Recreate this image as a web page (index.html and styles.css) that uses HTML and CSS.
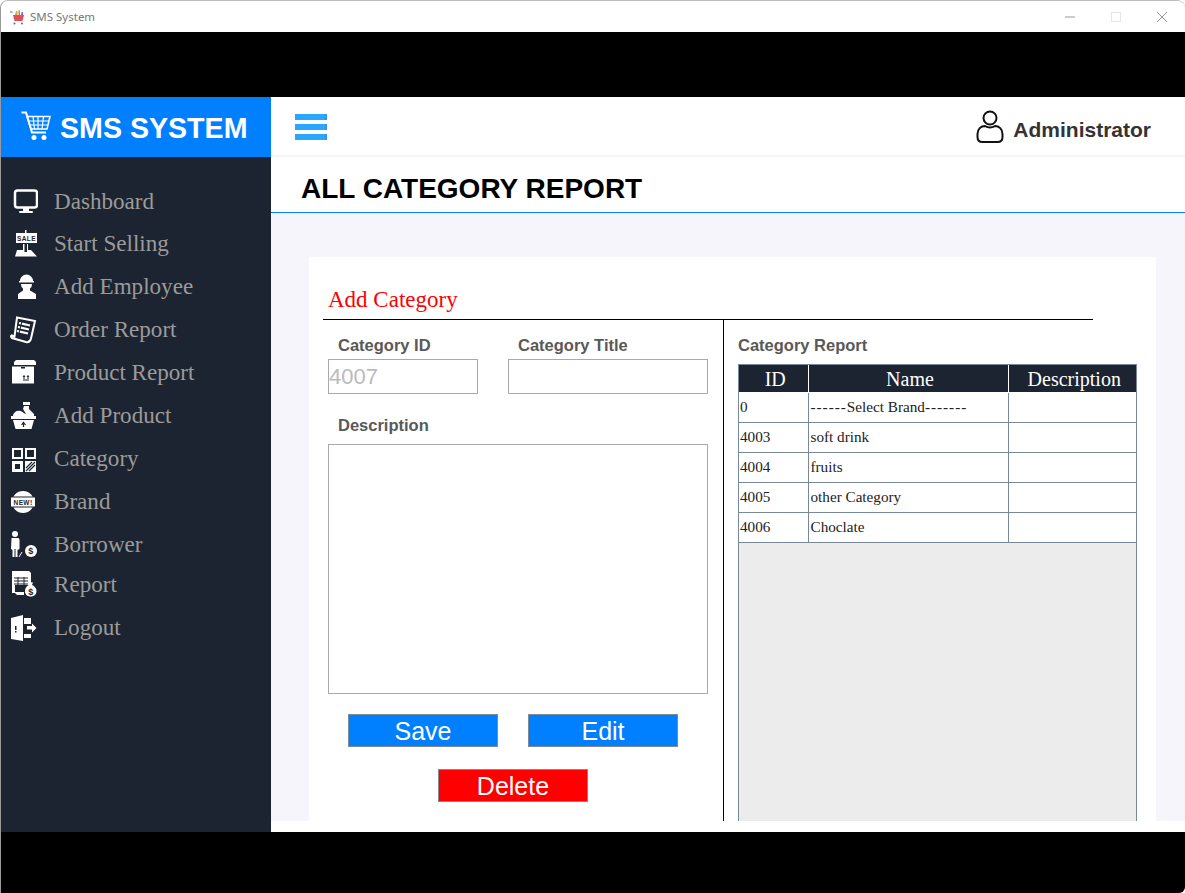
FILE: index.html
```html
<!DOCTYPE html>
<html lang="en">
<head>
    <meta charset="UTF-8">
    <meta name="viewport" content="width=device-width, initial-scale=1.0">
    <title>SMS System</title>
    <link rel="stylesheet" href="styles.css">
</head>
<body>
    <div class="window">
        <div class="titlebar">
            <svg class="app-icon" viewBox="0 0 16 16">
                <path d="M3 6h11l-1.500 6h-8z" fill="#e0505a"/>
                <path d="M5 6l1-4h1.500v4z" fill="#e8a030"/>
                <path d="M8.500 6V1.500H10V6z" fill="#70b060"/>
                <path d="M11 6l.5-3H13v3z" fill="#a060c0"/>
                <circle cx="4.500" cy="14.500" r="1" fill="#666"/>
                <circle cx="12" cy="14.500" r="1" fill="#666"/>
                <path d="M0 3h2.500" stroke="#666" stroke-width="1"/>
            </svg>
            <span class="app-name">SMS System</span>
            <div class="win-controls">
                <svg viewBox="0 0 12 12"><path d="M1 6h10" stroke="#999" stroke-width="1"/></svg>
                <svg viewBox="0 0 12 12"><rect x="1.500" y="1.500" width="9" height="9" fill="none" stroke="#e6e6e6"/></svg>
                <svg viewBox="0 0 12 12"><path d="M1 1l10 10M11 1L1 11" stroke="#999" stroke-width="1"/></svg>
            </div>
        </div>
        <div class="black-bar top"></div>
        <div class="app">
            <aside class="sidebar">
                <div class="logo">
                    <svg class="logo-cart" viewBox="0 0 30 30" fill="none" stroke="#fff">
                        <path d="M0.500 1.500h4.500l6 20h14" stroke-width="2"/>
                        <path d="M6 5.500h23l-3 12.500H10z" stroke-width="1.500"/>
                        <path d="M12 5.500l1.500 12.500M17 5.500v12.500M22.500 5.500L21 18M7.500 10h20.500M9 14h18" stroke-width="1.200"/>
                        <circle cx="13" cy="26.500" r="2.500" fill="#fff" stroke="none"/>
                        <circle cx="23" cy="26.500" r="2.500" fill="#fff" stroke="none"/>
                    </svg>
                    <span>SMS SYSTEM</span>
                </div>
                <nav class="nav">
                    <a class="nav-item">
                        <svg viewBox="0 0 28 28"><rect x="5" y="3.500" width="22" height="17" rx="2.500" fill="none" stroke="#fff" stroke-width="2.500"/><rect x="13" y="21" width="6" height="3" fill="#fff"/><rect x="9" y="24" width="14" height="2" rx="1" fill="#fff"/></svg>
                        Dashboard
                    </a>
                    <a class="nav-item">
                        <svg viewBox="0 0 28 28"><rect x="15" y="0" width="1.500" height="3" fill="#fff"/><rect x="6" y="3" width="21" height="10" fill="#fff"/><text x="16.500" y="11" class="icon-text">SALE</text><path d="M7 20h6v-6h1.500v8h2.500v-8H18v6h3l6 6.500H5z" fill="#fff"/></svg>
                        Start Selling
                    </a>
                    <a class="nav-item">
                        <svg viewBox="0 0 28 28"><path d="M10 8a6.500 6.500 0 0 1 13 0h1v1.500H9V8z" fill="#fff"/><path d="M11 11h11a5.500 5.500 0 0 1-2 4.500v2l6 3.500v5H8v-5l5-3.500v-2a5.500 5.500 0 0 1-2-4.500z" fill="#fff"/></svg>
                        Add Employee
                    </a>
                    <a class="nav-item">
                        <svg viewBox="0 0 28 28"><path d="M7 1.500l18 3.500-4 17.500c-.8 3-3 4-5 3.500L2 22c-1-1-1-2-.5-2.500l3 1z" fill="none" stroke="#fff" stroke-width="2"/><path d="M9 7l11 2.500M8 11l11 2.500M7 15l11 2.500" stroke="#fff" stroke-width="2.200" stroke-dasharray="2 1 9 0"/></svg>
                        Order Report
                    </a>
                    <a class="nav-item">
                        <svg viewBox="0 0 28 28"><path d="M4 3l2-2h18l2 2v3H4z" fill="#fff"/><path d="M2 7h22v17H2z" fill="#fff" transform="translate(0 .500)"/><rect x="11" y="8" width="4" height="1.500" fill="#1c2431"/><path d="M14 20v-3M18 20v-3M13 18l1-1.500 1 1.500M17 18l1-1.500 1 1.500M13 21h6" stroke="#1c2431" fill="none"/></svg>
                        Product Report
                    </a>
                    <a class="nav-item">
                        <svg viewBox="0 0 28 28"><rect x="13" y="0" width="7" height="3" fill="#fff"/><path d="M14 4h5v3l5 5v2H3c0-2 3-6 6-5 2-1 5 3 7 3l-3-5z" fill="#fff"/><rect x="1" y="14" width="25" height="3" fill="#fff"/><path d="M3 18h21l-2.500 9h-16z" fill="#fff"/><path d="M13.500 25v-4M11.500 23l2-2.500 2 2.500" stroke="#1c2431" stroke-width="1.200" fill="none"/></svg>
                        Add Product
                    </a>
                    <a class="nav-item">
                        <svg viewBox="0 0 28 28"><g fill="none" stroke="#fff" stroke-width="2"><rect x="3" y="4" width="9" height="9"/><rect x="16" y="4" width="9" height="9"/></g><rect x="2" y="16" width="11" height="11" fill="#fff"/><rect x="15" y="16" width="11" height="11" fill="#fff"/><path d="M5 19h5v5H5z" fill="#1c2431"/><path d="M16 26l9-9M16 23l6-6M19 26l6-6" stroke="#1c2431" stroke-width="1.200"/></svg>
                        Category
                    </a>
                    <a class="nav-item">
                        <svg viewBox="0 0 28 28"><circle cx="13" cy="14" r="11" fill="#fff"/><rect x="0" y="8.500" width="26" height="11" fill="#1c2431"/><rect x="1" y="9.500" width="24" height="9" fill="#fff"/><text x="13" y="17" class="icon-text">NEW!</text></svg>
                        Brand
                    </a>
                    <a class="nav-item">
                        <svg viewBox="0 0 28 28"><circle cx="5" cy="3" r="3" fill="#fff"/><path d="M1.500 7h7l1 1.500V18l-2 1v7H5.500v-8H4.500v8H2.500v-7L1 18z" fill="#fff"/><circle cx="21" cy="20" r="6" fill="#fff"/><text x="21" y="23" class="icon-text dollar">$</text><path d="M9 26l3-5" stroke="#fff"/></svg>
                        Borrower
                    </a>
                    <a class="nav-item nav-short">
                        <svg viewBox="0 0 28 28"><path d="M2 1h17l2 2v12H2z" fill="#fff"/><path d="M4 8h14M4 11h14M4 14h14M4 17h14M4 20h10M8 7v15M14 7v10" stroke="#1c2431" stroke-width="1"/><path d="M4 22h10v3H7z" fill="#fff"/><path d="M2 15h3v8H2z" fill="#fff"/><path d="M20 12l3 .5-1 2.500c3 1 4.500 4 4.500 6 0 4-3 5.500-5.500 5.500s-6-1-6-5.500c0-2 1-5 4-6z" fill="#fff"/><text x="21" y="24.500" class="icon-text dollar">$</text></svg>
                        Report
                    </a>
                    <a class="nav-item">
                        <svg viewBox="0 0 28 28"><path d="M1 4L13 1v26L1 25z" fill="#fff"/><rect x="14" y="4" width="7" height="6" fill="#fff"/><rect x="14" y="20" width="7" height="4" fill="#fff"/><rect x="5" y="12" width="1.500" height="4" fill="#1c2431"/><rect x="5" y="17" width="1.500" height="1.500" fill="#1c2431"/><path d="M17 12h5v-2.500l4.500 4.500-4.500 4.500V15.500h-5z" fill="#fff"/></svg>
                        Logout
                    </a>
                </nav>
            </aside>
            <div class="main">
                <header class="topbar">
                    <div class="hamburger">
                        <span></span><span></span><span></span>
                    </div>
                    <div class="user">
                        <svg class="user-icon" viewBox="0 0 28 33" fill="none" stroke="#111" stroke-width="2">
                            <circle cx="14" cy="8" r="6.500"/>
                            <path d="M9 16c-4 0-7.500 3-7.500 8v3c0 3 2 5 5 5h15c3 0 5-2 5-5v-3c0-5-3.500-8-7.500-8-1.500 1-3 1.500-5 1.500s-3.500-.5-5-1.500z"/>
                        </svg>
                        <span class="user-name">Administrator</span>
                    </div>
                </header>
                <div class="page-title"><h1>ALL CATEGORY REPORT</h1></div>
                <div class="content">
                    <section class="panel">
                        <h2 class="panel-head">Add Category</h2>
                        <div class="panel-body">
                            <form class="form-col">
                                <div class="field-row">
                                    <div class="field id-field">
                                        <label>Category ID</label>
                                        <input class="input" type="text" value="4007" disabled>
                                    </div>
                                    <div class="field title-field">
                                        <label>Category Title</label>
                                        <input class="input" type="text">
                                    </div>
                                </div>
                                <label class="desc-label">Description</label>
                                <textarea class="desc"></textarea>
                                <div class="btn-row">
                                    <button type="button" class="btn">Save</button>
                                    <button type="button" class="btn">Edit</button>
                                </div>
                                <div class="btn-row delete-row">
                                    <button type="button" class="btn btn-red">Delete</button>
                                </div>
                            </form>
                            <div class="report-col">
                                <label>Category Report</label>
                                <div class="table-box">
                                    <table>
                                        <colgroup>
                                            <col class="col-id">
                                            <col class="col-name">
                                            <col class="col-desc">
                                        </colgroup>
                                        <thead>
                                            <tr><th>ID</th><th>Name</th><th>Description</th></tr>
                                        </thead>
                                        <tbody>
                                            <tr><td>0</td><td><span class="dashes">------</span>Select Brand<span class="dashes">-------</span></td><td></td></tr>
                                            <tr><td>4003</td><td>soft drink</td><td></td></tr>
                                            <tr><td>4004</td><td>fruits</td><td></td></tr>
                                            <tr><td>4005</td><td>other Category</td><td></td></tr>
                                            <tr><td>4006</td><td>Choclate</td><td></td></tr>
                                        </tbody>
                                    </table>
                                </div>
                            </div>
                        </div>
                    </section>
                </div>
                <div class="main-foot"></div>
            </div>
        </div>
        <div class="black-bar bottom"></div>
    </div>
</body>
</html>
```

FILE: styles.css
```css
html, body {
    margin: 0;
    padding: 0;
    height: 893px;
    overflow: hidden;
    background: #fff;
}

.window {
    width: 1185px;
    height: 893px;
    box-sizing: border-box;
    border-top: 1px solid #bdbdbd;
    border-left: 1px solid #9a9a9a;
    border-radius: 8px 8px 6px 0;
    display: flex;
    flex-direction: column;
    overflow: hidden;
}

.titlebar {
    height: 31px;
    background: #fff;
    display: flex;
    align-items: center;
    padding-left: 9px;
}

.app-icon {
    width: 16px;
    height: 16px;
}

.app-name {
    font-family: "Noto Sans", sans-serif;
    font-size: 11.500px;
    color: #777;
    margin-left: 4px;
}

.win-controls {
    margin-left: auto;
    display: flex;
    gap: 34px;
    padding-right: 17px;
}

.win-controls svg {
    width: 12px;
    height: 12px;
}

.black-bar {
    background: #000;
}

.black-bar.top {
    height: 65px;
}

.black-bar.bottom {
    height: 61px;
}

.app {
    height: 735px;
    display: flex;
}

.sidebar {
    width: 270px;
    background: #1c2431;
    flex-shrink: 0;
}

.logo {
    height: 60px;
    background: #0080ff;
    display: flex;
    align-items: center;
    padding-left: 20px;
    gap: 9px;
    color: #fff;
    font-family: "Liberation Sans", Arial, sans-serif;
    font-weight: bold;
    font-size: 28.600px;
}

.logo span {
    padding-top: 3px;
}

.logo-cart {
    width: 30px;
    height: 30px;
    margin-top: -2px;
}

.nav {
    padding-top: 23px;
}

.nav-item {
    height: 43px;
    display: flex;
    align-items: center;
    gap: 16px;
    padding-left: 9px;
    font-family: "Liberation Serif", "Times New Roman", serif;
    font-size: 23.100px;
    color: #9b9b9b;
}

.nav-item:first-child {
    height: 42px;
}

.nav-short {
    height: 40px;
    margin-bottom: 2px;
    margin-top: -2px;
}

.nav-item svg {
    width: 28px;
    height: 28px;
    flex-shrink: 0;
}

.icon-text {
    font-family: "Liberation Sans", Arial, sans-serif;
    font-weight: bold;
    font-size: 6.500px;
    letter-spacing: .4px;
    text-anchor: middle;
    fill: #1c2431;
}

.icon-text.dollar {
    font-size: 9px;
}

.main {
    flex: 1;
    min-width: 0;
    display: flex;
    flex-direction: column;
    background: #fff;
}

.topbar {
    height: 58px;
    border-bottom: 2px solid #f5f5fb;
    display: flex;
    align-items: center;
    justify-content: space-between;
    padding: 0 34px 0 24px;
}

.hamburger {
    width: 32px;
    margin-top: 2px;
    display: flex;
    flex-direction: column;
    gap: 4px;
}

.hamburger span {
    height: 6px;
    background: #2aa6ff;
    border-right: 2px solid #3f8cf5;
}

.user {
    display: flex;
    align-items: center;
    gap: 9px;
    font-family: "Liberation Sans", Arial, sans-serif;
    font-weight: bold;
    font-size: 21px;
    color: #333;
}

.user-name {
    padding-top: 8px;
}

.user-icon {
    width: 28px;
    height: 33px;
}

.page-title {
    height: 55px;
    border-bottom: 1px solid #0080ff;
    padding-left: 30px;
    display: flex;
    align-items: center;
}

.page-title h1 {
    margin: 0;
    padding-top: 8px;
    font-family: "Liberation Sans", Arial, sans-serif;
    font-size: 28px;
    font-weight: bold;
    color: #000;
}

.content {
    height: 608px;
    background: #f5f5fb;
    padding: 44px 29px 0 38px;
    box-sizing: border-box;
    overflow: hidden;
}

.main-foot {
    height: 11px;
    background: #fff;
}

.panel {
    background: #fff;
    height: 600px;
}

.panel-head {
    margin: 0 0 0 14px;
    width: 770px;
    height: 63px;
    box-sizing: border-box;
    border-bottom: 1px solid #000;
    padding: 30px 0 0 5px;
    font-family: "Liberation Serif", "Times New Roman", serif;
    font-size: 23px;
    font-weight: normal;
    color: #f00;
}

.panel-body {
    display: flex;
    height: 520px;
}

label {
    display: block;
    font-family: "Liberation Sans", Arial, sans-serif;
    font-size: 16.500px;
    font-weight: bold;
    line-height: 18px;
    color: #595959;
}

.form-col {
    width: 415px;
    box-sizing: border-box;
    border-right: 1px solid #000;
    padding: 16px 0 0 19px;
}

.field-row {
    display: flex;
    gap: 30px;
}

.field label {
    padding-left: 10px;
    margin-bottom: 5px;
}

.input {
    display: block;
    height: 35px;
    box-sizing: border-box;
    border: 1px solid #aaa;
    background: #fff;
    padding: 0;
    font-family: "Liberation Sans", Arial, sans-serif;
    font-size: 22px;
    color: #bbb;
}

.id-field .input {
    width: 150px;
}

.title-field .input {
    width: 200px;
}

.desc-label {
    padding-left: 10px;
    margin-top: 22px;
    margin-bottom: 10px;
}

.desc {
    display: block;
    width: 380px;
    height: 250px;
    box-sizing: border-box;
    border: 1px solid #aaa;
    padding: 0;
    resize: none;
}

.btn-row {
    display: flex;
    gap: 30px;
    margin: 20px 0 0 20px;
}

.delete-row {
    margin: 22px 0 0 110px;
}

.btn {
    width: 150px;
    height: 33px;
    box-sizing: border-box;
    border: 1px solid #7f8a99;
    background: #0080ff;
    color: #fff;
    padding: 2px 0 0;
    font-family: "Liberation Sans", Arial, sans-serif;
    font-size: 25px;
    line-height: 29px;
}

.btn-red {
    background: #f00;
}

.report-col {
    padding: 16px 0 0 14px;
}

.report-col label {
    margin-bottom: 10px;
}

.table-box {
    width: 399px;
    height: 480px;
    box-sizing: border-box;
    border: 1px solid #778899;
    background: #ececec;
}

table {
    width: 397px;
    table-layout: fixed;
    border-collapse: collapse;
    font-family: "Liberation Serif", "Times New Roman", serif;
}

.col-id {
    width: 69px;
}

.col-name {
    width: 200px;
}

.col-desc {
    width: 128px;
}

th {
    height: 25px;
    padding: 2px 0 0 4px;
    background: #1c2431;
    border: 1px solid #fff;
    border-top: none;
    color: #fff;
    font-size: 20px;
    font-weight: normal;
}

th:first-child {
    border-left: none;
}

th:last-child {
    border-right: none;
}

td {
    height: 27px;
    padding: 0 0 2px 1px;
    background: #fff;
    border: 1px solid #778899;
    color: #222;
    font-size: 15.200px;
}

td:nth-child(2) {
    padding-left: 2px;
}

td:first-child {
    border-left: none;
}

td:last-child {
    border-right: none;
}

.dashes {
    letter-spacing: 1px;
}
```
